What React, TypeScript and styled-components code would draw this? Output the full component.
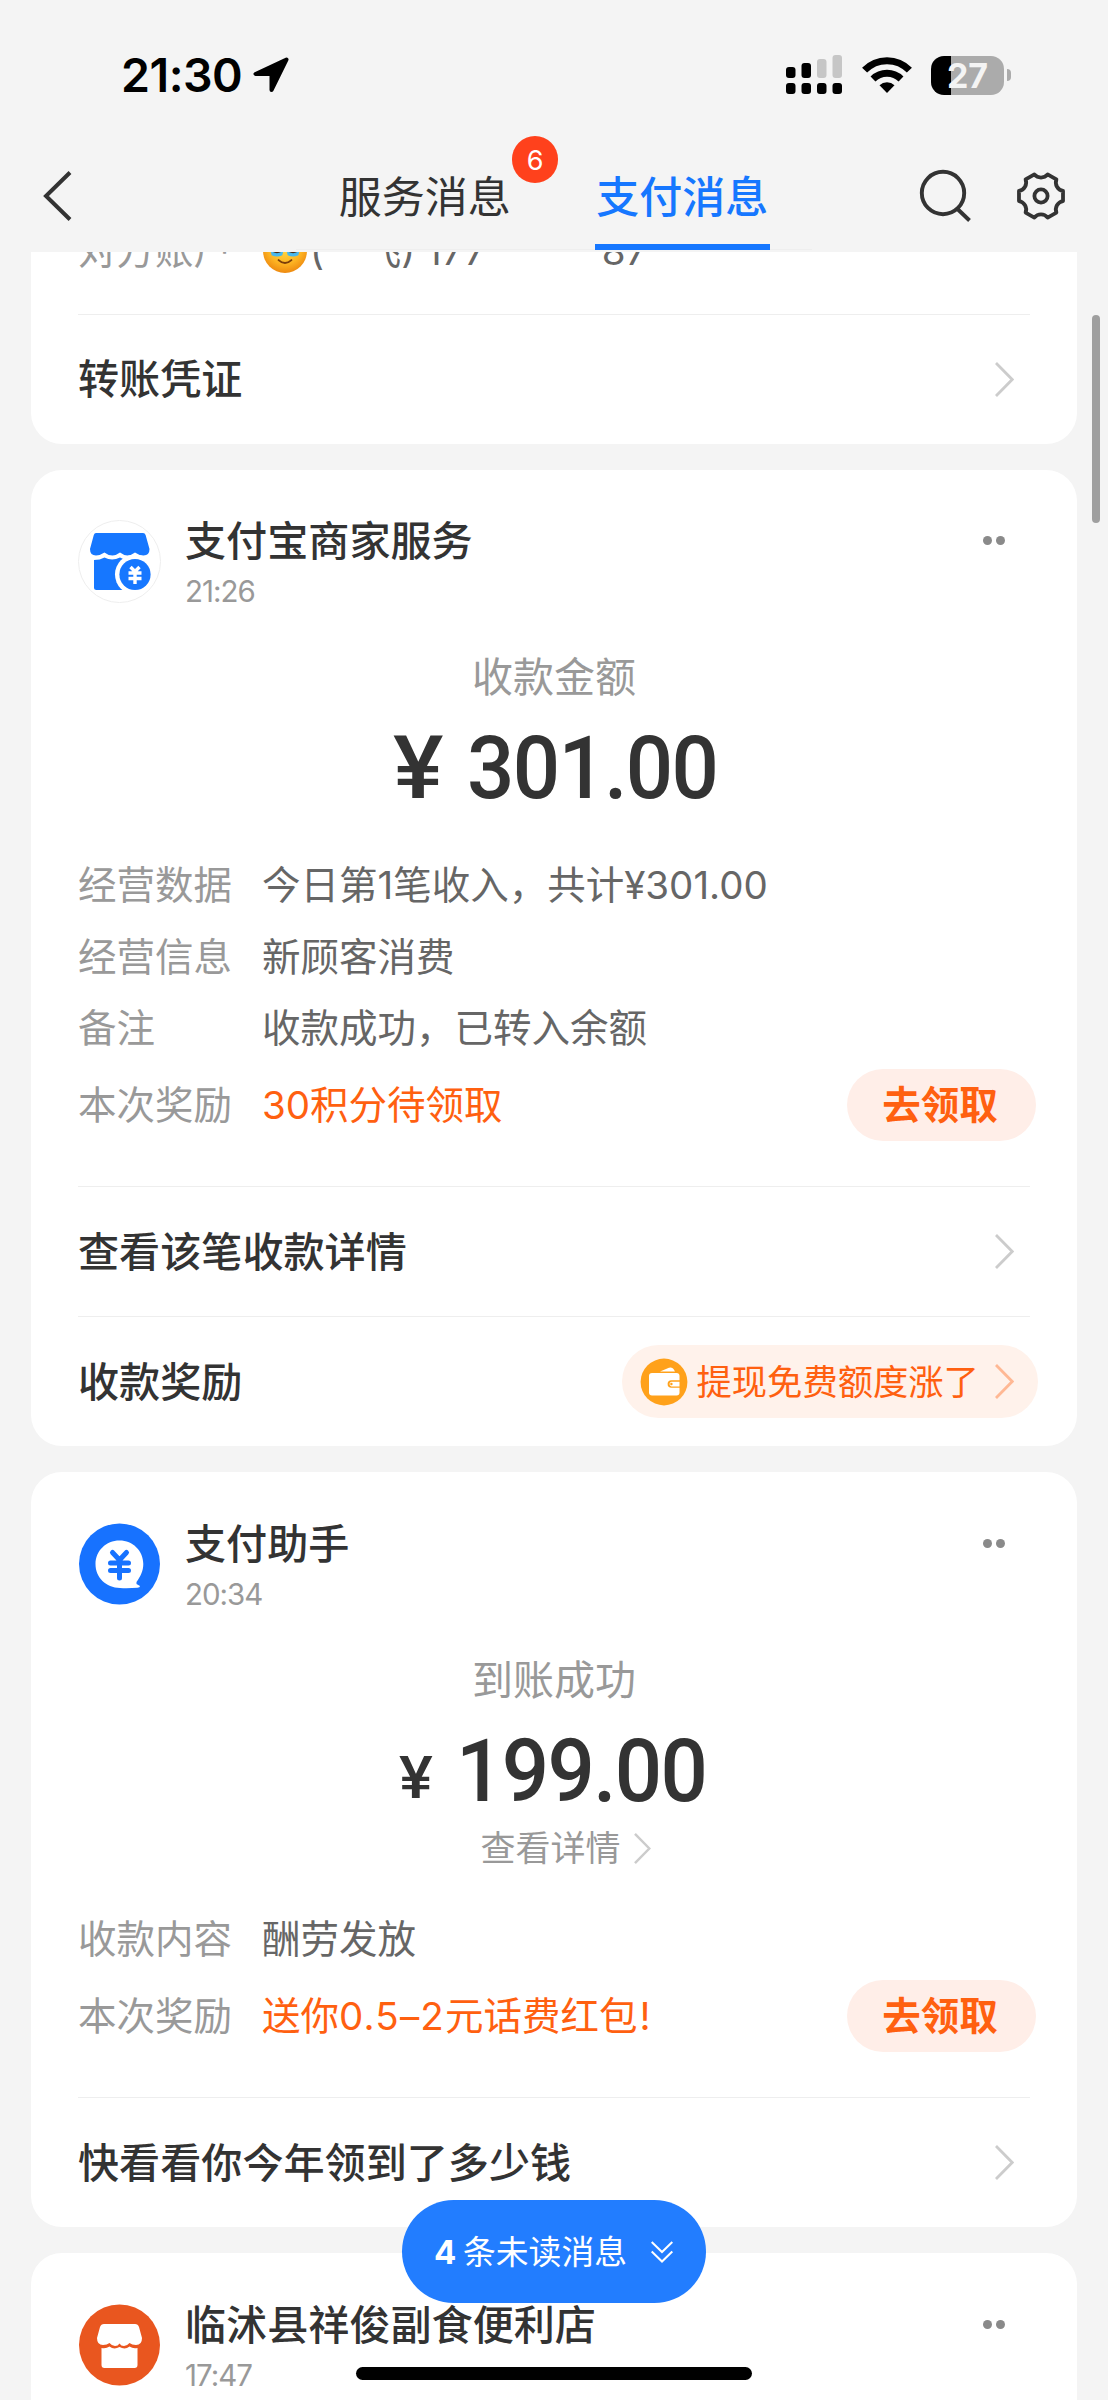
import React from "react";
import styled, { createGlobalStyle } from "styled-components";

const GlobalStyle = createGlobalStyle`
  body {
    margin: 0;
    background: #f4f4f4;
    font-family: Inter, "Noto Sans CJK SC", sans-serif;
    color: #333;
  }
  svg { display: block; flex: none; }
`;

const Screen = styled.main`
  position: relative;
  display: flex;
  flex-direction: column;
  width: 1108px;
  height: 2400px;
  overflow: hidden;
  background: #f4f4f4;
`;

const StatusBar = styled.div`
  display: flex;
  align-items: center;
  height: 150px;
  flex: none;
  padding: 0 97px 0 121px;
`;
const Clock = styled.span`
  width: 132px;
  font-size: 46.5px;
  font-weight: 600;
  letter-spacing: -0.5px;
  color: #000;
  white-space: nowrap;
`;
const StatusIcons = styled.div`
  display: flex;
  align-items: center;
  margin-left: auto;
  gap: 19px;
`;
const BatteryRow = styled.div`
  display: flex;
  align-items: center;
  gap: 2.5px;
`;
const BatteryBody = styled.div`
  display: flex;
  align-items: center;
  justify-content: center;
  width: 73px;
  height: 39px;
  box-sizing: border-box;
  border-radius: 13px;
  background: linear-gradient(90deg, #000 20px, #ababab 20px);
  color: #f4f4f4;
  font-size: 34px;
  font-weight: 700;
  line-height: 39px;
`;
const BatteryTip = styled.div`
  width: 4.5px;
  height: 12px;
  border-radius: 0 5px 5px 0;
  background: #ababab;
`;

const NavBar = styled.nav`
  display: grid;
  grid-template-columns: 296px 516px 296px;
  height: 102px;
  flex: none;
`;
const NavSide = styled.div<{ $pad: number }>`
  display: flex;
  align-items: center;
  height: 92px;
  padding-left: ${(p) => p.$pad}px;
  gap: 42px;
`;
const Tabs = styled.div`
  display: grid;
  grid-template-columns: 1fr 1fr;
  height: 99px;
  padding-right: 1px;
  border-bottom: 1px solid #eee;
`;
const Tab = styled.div<{ $active?: boolean }>`
  position: relative;
  display: flex;
  flex-direction: column;
  align-items: center;
  font-size: 43px;
  line-height: 94px;
  font-weight: ${(p) => (p.$active ? 500 : 400)};
  color: ${(p) => (p.$active ? "#1677ff" : "#333")};
`;
const Underline = styled.div`
  width: 175px;
  height: 6px;
  background: #1677ff;
`;
const Badge = styled.span`
  position: absolute;
  left: 216px;
  top: -14px;
  width: 46px;
  height: 47px;
  border-radius: 24px;
  background: #ff411c;
  color: #fff;
  font-size: 27px;
  line-height: 49px;
  text-align: center;
`;

const Feed = styled.div`
  display: flex;
  flex-direction: column;
  flex: 1;
  min-height: 0;
  overflow: hidden;
  padding: 0 31px;
  gap: 26px;
`;
const Card = styled.section<{ $height: number; $top?: number; $clipped?: boolean }>`
  display: flex;
  flex-direction: column;
  flex: none;
  box-sizing: border-box;
  height: ${(p) => p.$height}px;
  padding: ${(p) => p.$top ?? 0}px 47px 0;
  margin-top: ${(p) => (p.$clipped ? -37 : 0)}px;
  border-radius: 31px;
  background: #fff;
`;
const CardHeader = styled.header`
  display: flex;
  height: 83px;
  flex: none;
`;
const Avatar = styled.div`
  width: 83px;
  margin-right: 24px;
`;
const Sender = styled.div`
  flex: 1;
  font-size: 41.1px;
  font-weight: 500;
  line-height: 42px;
  white-space: nowrap;
`;
const Time = styled.div`
  margin-top: 11px;
  font-size: 29.5px;
  font-weight: 400;
  line-height: 36px;
  letter-spacing: -1px;
  color: #999;
`;
const More = styled.div`
  display: flex;
  gap: 4.5px;
  padding: 16px 25px 0 0;
`;
const Dot = styled.i`
  width: 9px;
  height: 9px;
  border-radius: 50%;
  background: #8a8a8a;
`;
const Caption = styled.div`
  margin-top: 44px;
  height: 60px;
  font-size: 41px;
  line-height: 60px;
  text-align: center;
  color: #999;
`;
const Amount = styled.div<{ $small?: boolean }>`
  display: flex;
  align-items: baseline;
  justify-content: center;
  height: 90px;
  margin-top: 16px;
  padding: ${(p) => (p.$small ? "0 3px 0 0" : "0 0 0 2px")};
  font-family: Roboto, "Noto Sans CJK SC", sans-serif;
  font-size: 88px;
  font-weight: 500;
  line-height: 90px;
  white-space: nowrap;
`;
const Digits = styled.span`
  letter-spacing: -1.7px;
  transform: scaleX(0.947);
  transform-origin: right;
`;
const Yen = styled.span<{ $small?: boolean }>`
  margin-right: ${(p) => (p.$small ? 12 : 13)}px;
  font-size: ${(p) => (p.$small ? 59 : 88)}px;
  line-height: 1;
  transform: translateY(${(p) => (p.$small ? -3 : 0)}px) scaleX(1.08);
  transform-origin: left;
`;
const DetailLink = styled.div`
  display: flex;
  align-items: center;
  justify-content: center;
  gap: 13px;
  height: 44px;
  margin: 10px 0 0 23px;
  font-size: 35px;
  line-height: 44px;
  color: #999;
`;
const Fields = styled.dl<{ $top: number }>`
  display: flex;
  flex-direction: column;
  margin: ${(p) => p.$top}px 0 0;
`;
const Field = styled.div<{ $reward?: boolean }>`
  display: flex;
  align-items: center;
  height: ${(p) => (p.$reward ? 72 : 71.4)}px;
  margin-top: ${(p) => (p.$reward ? 5 : 0)}px;
  font-size: 38.5px;
  line-height: 73px;
  white-space: nowrap;
`;
const Label = styled.dt`
  width: 184px;
  color: #999;
`;
const Value = styled.dd<{ $accent?: boolean }>`
  flex: 1;
  display: flex;
  align-items: center;
  margin: 0;
  color: ${(p) => (p.$accent ? "#ff6010" : "#666")};
`;
const Account = styled.span`
  margin-left: 2px;
`;
const Mask = styled.span`
  vertical-align: 2px;
`;
const Range = styled.span`
  letter-spacing: 1.2px;
`;
const Exclamation = styled.span`
  margin-left: 2px;
`;
const ClaimButton = styled.button`
  width: 189px;
  height: 72px;
  margin-right: -6px;
  padding: 0 3px 0 0;
  border: 0;
  border-radius: 36px;
  background: #ffeee8;
  color: #ff6010;
  font: 700 38.5px/72px Inter, "Noto Sans CJK SC", sans-serif;
`;
const ActionRow = styled.div<{ $top?: number }>`
  display: flex;
  align-items: center;
  justify-content: space-between;
  flex: none;
  box-sizing: border-box;
  height: 130px;
  margin-top: ${(p) => p.$top ?? 0}px;
  padding-right: 16px;
  border-top: 1px solid #eee;
  font-size: 41.1px;
  font-weight: 500;
  line-height: 40px;
  white-space: nowrap;
`;
const PromoPill = styled.div`
  display: flex;
  align-items: center;
  box-sizing: border-box;
  width: 416px;
  height: 73px;
  margin-right: -24px;
  padding-left: 17.5px;
  border-radius: 37px;
  background: #fff2eb;
  color: #ff6010;
  font-size: 35.3px;
  font-weight: 400;
`;
const PromoText = styled.span`
  margin: 0 16px 0 9px;
  padding-top: 2px;
`;

const ScrollThumb = styled.div`
  position: absolute;
  left: 1092px;
  top: 315px;
  width: 8px;
  height: 208px;
  border-radius: 4px;
  background: #9f9f9f;
`;
const UnreadPill = styled.div`
  position: absolute;
  left: 402px;
  top: 2200px;
  display: flex;
  align-items: center;
  box-sizing: border-box;
  width: 304px;
  height: 103px;
  padding-left: 32px;
  border-radius: 52px;
  background: #227dff;
  color: #fff;
  font-size: 32.8px;
  line-height: 40px;
  white-space: nowrap;
`;
const UnreadCount = styled.b`
  width: 29px;
  font-size: 33px;
  font-weight: 700;
`;
const UnreadText = styled.span`
  margin-right: 24px;
`;
const HomeBar = styled.div`
  position: absolute;
  left: 356px;
  top: 2367px;
  width: 396px;
  height: 13px;
  border-radius: 7px;
  background: #000;
`;

const Chevron = ({ color = "#ccc", width = 19, height = 35 }) => (
  <svg width={width} height={height} viewBox="0 0 19 35" fill="none" stroke={color} strokeWidth="2.8">
    <path d="M1 1 L17.2 17.5 L1 34" />
  </svg>
);

const polar = (r: number, deg: number) => {
  const a = (deg * Math.PI) / 180;
  return `${(27 + r * Math.cos(a)).toFixed(2)} ${(27 + r * Math.sin(a)).toFixed(2)}`;
};
const gearPath =
  [0, 60, 120, 180, 240, 300]
    .map((a, i) => `${i ? "A 8.5 8.5 0 0 0" : "M"} ${polar(22.6, a - 13)} Q ${polar(22, a)} ${polar(22.6, a + 13)}`)
    .join(" ") + ` A 8.5 8.5 0 0 0 ${polar(22.6, -13)} Z`;

const GearIcon = () => (
  <svg width="54" height="54" viewBox="0 0 54 54" fill="none" stroke="#333" strokeWidth="3.8" strokeLinejoin="round">
    <path d={gearPath} />
    <circle cx="27" cy="27" r="6.6" />
  </svg>
);

const SearchIcon = () => (
  <svg width="54" height="54" viewBox="0 0 54 54" fill="none" stroke="#333" strokeWidth="3.9">
    <circle cx="25" cy="24" r="21.2" />
    <path d="M39.5 40 L51.5 51.5" />
  </svg>
);

const BackIcon = () => (
  <svg width="30" height="50" viewBox="0 0 30 50" fill="none" stroke="#333" strokeWidth="4">
    <path d="M27 1.5 L3 25 L27 48.5" />
  </svg>
);

const LocationIcon = () => (
  <svg width="36" height="36" viewBox="0 0 36 36" stroke="#000" strokeWidth="4" strokeLinejoin="round">
    <path d="M33.5 2.5 L2.5 17 H18.5 V33 Z" />
  </svg>
);

const SignalIcon = () => (
  <svg width="57" height="40" viewBox="0 0 57 40">
    {[0, 15.5, 31, 46.5].map((x, i) => (
      <g key={x}>
        <rect x={x} y={12 - i * 4} width="9.5" height={11 + i * 4} rx="3" fill={i < 2 ? "#000" : "#c6c6c6"} />
        <rect x={x} y="28" width="9.5" height="11" rx="3" />
      </g>
    ))}
  </svg>
);

const WifiIcon = () => (
  <svg width="50" height="38" viewBox="0 0 50 38" fill="none" stroke="#000" strokeWidth="7">
    <path d="M2.6 14.2 A31 31 0 0 1 47.4 14.2" />
    <path d="M11 23 A20 20 0 0 1 39 23" />
    <path d="M25 37 L17.5 29.3 A11 11 0 0 1 32.5 29.3 Z" fill="#000" stroke="none" />
  </svg>
);

const TearyFace = () => (
  <svg width="46" height="46" viewBox="0 0 43 43">
    <defs>
      <radialGradient id="face" cx="50%" cy="40%" r="60%">
        <stop offset="0" stopColor="#ffe04a" />
        <stop offset="0.65" stopColor="#fdb423" />
        <stop offset="1" stopColor="#ee8a10" />
      </radialGradient>
    </defs>
    <circle cx="21.5" cy="21.5" r="20.5" fill="url(#face)" />
    <ellipse cx="14" cy="18" rx="5.5" ry="7" fill="#4a2a12" />
    <ellipse cx="29" cy="18" rx="5.5" ry="7" fill="#4a2a12" />
    <path d="M8 21 Q14 26 20 21 L19 25.5 Q14 28 9 25.5Z M23 21 Q29 26 35 21 L34 25.5 Q29 28 24 25.5Z" fill="#48b8ee" />
    <path d="M15.5 30 Q21.5 35.5 27.5 30" fill="none" stroke="#7a3d0a" strokeWidth="1.8" strokeLinecap="round" />
  </svg>
);

const MerchantLogo = () => (
  <svg width="83" height="83" viewBox="0 0 83 83">
    <circle cx="41.5" cy="41.5" r="41" fill="#fff" stroke="#eee" />
    <path
      d="M18 13 H65 Q67 13 67.6 15 L71.5 29 Q71.5 35.5 65.5 35.5 Q61 35.5 57 32.5 Q53 35.5 49.5 35.5 Q46 35.5 42 32.5 Q38 35.5 34.5 35.5 Q30 35.5 26.5 32.5 Q22 35.5 18 35.5 Q12 35.5 12 29 L15.8 15 Q16.4 13 18 13Z"
      fill="#1677ff"
    />
    <path d="M16 40 Q22 40 26.5 37.5 Q34 41.5 42 37.5 Q47 40.5 52 40 V70 H18.5 Q16 70 16 67.5Z" fill="#1677ff" />
    <circle cx="57" cy="54.5" r="20" fill="#fff" />
    <circle cx="57" cy="54.5" r="15.6" fill="#1677ff" />
    <path d="M52.5 47 L57 51.5 L61.5 47 M57 51.5 V64 M50.5 53 H63.5 M50.5 58.5 H63.5" fill="none" stroke="#fff" strokeWidth="3.4" />
  </svg>
);

const AssistantLogo = () => (
  <svg width="83" height="83" viewBox="0 0 83 83">
    <circle cx="41.5" cy="41" r="40.5" fill="#1772ff" />
    <path d="M41.5 17.5 C55 17.5 65.3 28 65.3 41 C65.3 48 62.5 53.5 58.5 59 L58.5 61 L62 63 Q62 64.5 59.5 64.7 Q50 65.5 42 65 C28 64.5 17.5 54.5 17.5 41 C17.5 28 28 17.5 41.5 17.5Z" fill="#fff" />
    <path d="M34.5 29.5 L41.5 37 L48.5 29.5 M41.5 37.5 V55 M32.5 40 H50.5 M32.5 47.5 H50.5" fill="none" stroke="#1772ff" strokeWidth="5" strokeLinecap="round" />
  </svg>
);

const StoreLogo = () => (
  <svg width="83" height="83" viewBox="0 0 83 83">
    <circle cx="41.5" cy="41" r="40.5" fill="#e9561f" />
    <path d="M26 20 H57 Q60 20 61 23 L64 34 Q64 41 58 41 Q54 41 51.5 39 Q49 42 46 42 Q43 42 41.5 39.5 Q40 42 37 42 Q34 42 31.5 39 Q29 41 25 41 Q19 41 19 34 L22 23 Q23 20 26 20Z" fill="#fff" />
    <path d="M23.5 44 Q28 45 31.5 42.5 Q36 46 41.5 43 Q47 46 51.5 42.5 Q55 45 59.5 44 V61 Q59.5 64 56.5 64 H26.5 Q23.5 64 23.5 61Z" fill="#fff" />
  </svg>
);

const WalletIcon = () => (
  <svg width="48" height="48" viewBox="0 0 48 48">
    <circle cx="24" cy="24" r="23.4" fill="#ffa11a" />
    <path d="M20 13.5 L29 9.8 Q32 8.8 33.5 11 L35 13.5Z" fill="#fff" />
    <rect x="9" y="15" width="30.5" height="22.5" rx="3" fill="#fff" />
    <path d="M41 22.2 H31.4 A3.8 3.8 0 0 0 31.4 29.8 H41Z" fill="#ffa11a" />
    <path d="M39.5 23.7 H31.4 A2.4 2.4 0 0 0 31.4 28.4 H39.5Z" fill="#fff" />
    <circle cx="31.4" cy="26" r="1.2" fill="#ffa11a" />
  </svg>
);

const DoubleChevron = () => (
  <svg width="22" height="22" viewBox="0 0 22 22" fill="none" stroke="#fff" strokeWidth="2">
    <path d="M0.7 1 L11 11 L21.3 1 M0.7 10.5 L11 20.5 L21.3 10.5" />
  </svg>
);

const MessageHeader = ({ logo, name, time }: { logo: React.ReactNode; name: string; time: string }) => (
  <CardHeader>
    <Avatar>{logo}</Avatar>
    <Sender>
      {name}
      <Time>{time}</Time>
    </Sender>
    <More>
      <Dot />
      <Dot />
    </More>
  </CardHeader>
);

export default function App() {
  return (
    <Screen>
      <GlobalStyle />
      <StatusBar>
        <Clock>21:30</Clock>
        <LocationIcon />
        <StatusIcons>
          <SignalIcon />
          <WifiIcon />
          <BatteryRow>
            <BatteryBody>27</BatteryBody>
            <BatteryTip />
          </BatteryRow>
        </StatusIcons>
      </StatusBar>
      <NavBar>
        <NavSide $pad={43}>
          <BackIcon />
        </NavSide>
        <Tabs>
          <Tab>
            服务消息
            <Badge>6</Badge>
          </Tab>
          <Tab $active>
            支付消息
            <Underline />
          </Tab>
        </Tabs>
        <NavSide $pad={106}>
          <SearchIcon />
          <GearIcon />
        </NavSide>
      </NavBar>

      <Feed>
        <Card $height={229} $clipped>
          <Fields $top={0}>
            <Field>
              <Label>对方账户</Label>
              <Value>
                <TearyFace />
                <Account>
                  (<Mask>**</Mask>飞) 177<Mask>******</Mask>87
                </Account>
              </Value>
            </Field>
          </Fields>
          <ActionRow $top={27.6}>
            转账凭证
            <Chevron />
          </ActionRow>
        </Card>

        <Card $height={976} $top={50}>
          <MessageHeader logo={<MerchantLogo />} name="支付宝商家服务" time="21:26" />
          <Caption>收款金额</Caption>
          <Amount>
            <Yen>¥</Yen>
            <Digits>301.00</Digits>
          </Amount>
          <Fields $top={37}>
            <Field>
              <Label>经营数据</Label>
              <Value>今日第1笔收入，共计¥301.00</Value>
            </Field>
            <Field>
              <Label>经营信息</Label>
              <Value>新顾客消费</Value>
            </Field>
            <Field>
              <Label>备注</Label>
              <Value>收款成功，已转入余额</Value>
            </Field>
            <Field $reward>
              <Label>本次奖励</Label>
              <Value $accent>30积分待领取</Value>
              <ClaimButton>去领取</ClaimButton>
            </Field>
          </Fields>
          <ActionRow $top={45}>
            查看该笔收款详情
            <Chevron />
          </ActionRow>
          <ActionRow>
            收款奖励
            <PromoPill>
              <WalletIcon />
              <PromoText>提现免费额度涨了</PromoText>
              <Chevron color="#ffb894" />
            </PromoPill>
          </ActionRow>
        </Card>

        <Card $height={755} $top={51}>
          <MessageHeader logo={<AssistantLogo />} name="支付助手" time="20:34" />
          <Caption>到账成功</Caption>
          <Amount $small>
            <Yen $small>¥</Yen>
            <Digits>199.00</Digits>
          </Amount>
          <DetailLink>
            查看详情
            <Chevron width={17} height={31} />
          </DetailLink>
          <Fields $top={34}>
            <Field>
              <Label>收款内容</Label>
              <Value>酬劳发放</Value>
            </Field>
            <Field $reward>
              <Label>本次奖励</Label>
              <Value $accent>
                <span>
                  送你<Range>0.5–2</Range>元话费红包<Exclamation>!</Exclamation>
                </span>
              </Value>
              <ClaimButton>去领取</ClaimButton>
            </Field>
          </Fields>
          <ActionRow $top={45}>
            快看看你今年领到了多少钱
            <Chevron />
          </ActionRow>
        </Card>

        <Card $height={300} $top={51}>
          <MessageHeader logo={<StoreLogo />} name="临沭县祥俊副食便利店" time="17:47" />
        </Card>
      </Feed>

      <ScrollThumb />
      <UnreadPill>
        <UnreadCount>4</UnreadCount>
        <UnreadText>条未读消息</UnreadText>
        <DoubleChevron />
      </UnreadPill>
      <HomeBar />
    </Screen>
  );
}
